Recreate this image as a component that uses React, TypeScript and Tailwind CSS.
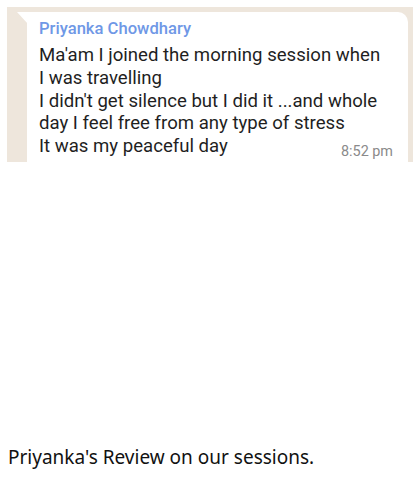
import React from "react";

export default function App() {
  return (
    <div className="w-[413px] h-[478px] bg-white flex flex-col">
      <div className="ml-[7px] mt-[7px] w-[406px] h-[155px] bg-[#eee6dc] overflow-hidden pl-[20px] pr-[5px] pt-[5px]">
        <div className="relative bg-white rounded-[10px] rounded-tl-none h-[160px] pl-[12px] pr-[15px] pt-[7px]" style={{ fontFamily: "Roboto, sans-serif" }}>
          <svg className="absolute left-[-10px] top-0" width="11" height="12" viewBox="0 0 11 12">
            <path d="M0 0 H11 V12 Z" fill="#ffffff" />
          </svg>
          <div className="text-[16.6px] leading-[20px] font-medium text-[#6f98e6]">Priyanka Chowdhary</div>
          <div className="mt-[5px] text-[18.6px] leading-[22.75px] text-[#1f1f1f]">
            <div>Ma'am I joined the morning session when</div>
            <div>I was travelling</div>
            <div>I didn't get silence but I did it ...and whole</div>
            <div>day I feel free from any type of stress</div>
            <div className="flex items-end justify-between">
              <span>It was my peaceful day</span>
              <span className="text-[14.4px] leading-[16px] text-[#8a8a8a] mb-[-2px]">8:52 pm</span>
            </div>
          </div>
        </div>
      </div>
      <div className="mt-[283px] ml-[8px] text-[19px] leading-[24px] text-[#111]" style={{ fontFamily: "'Noto Sans', sans-serif" }}>
        Priyanka's Review on our sessions.
      </div>
    </div>
  );
}
